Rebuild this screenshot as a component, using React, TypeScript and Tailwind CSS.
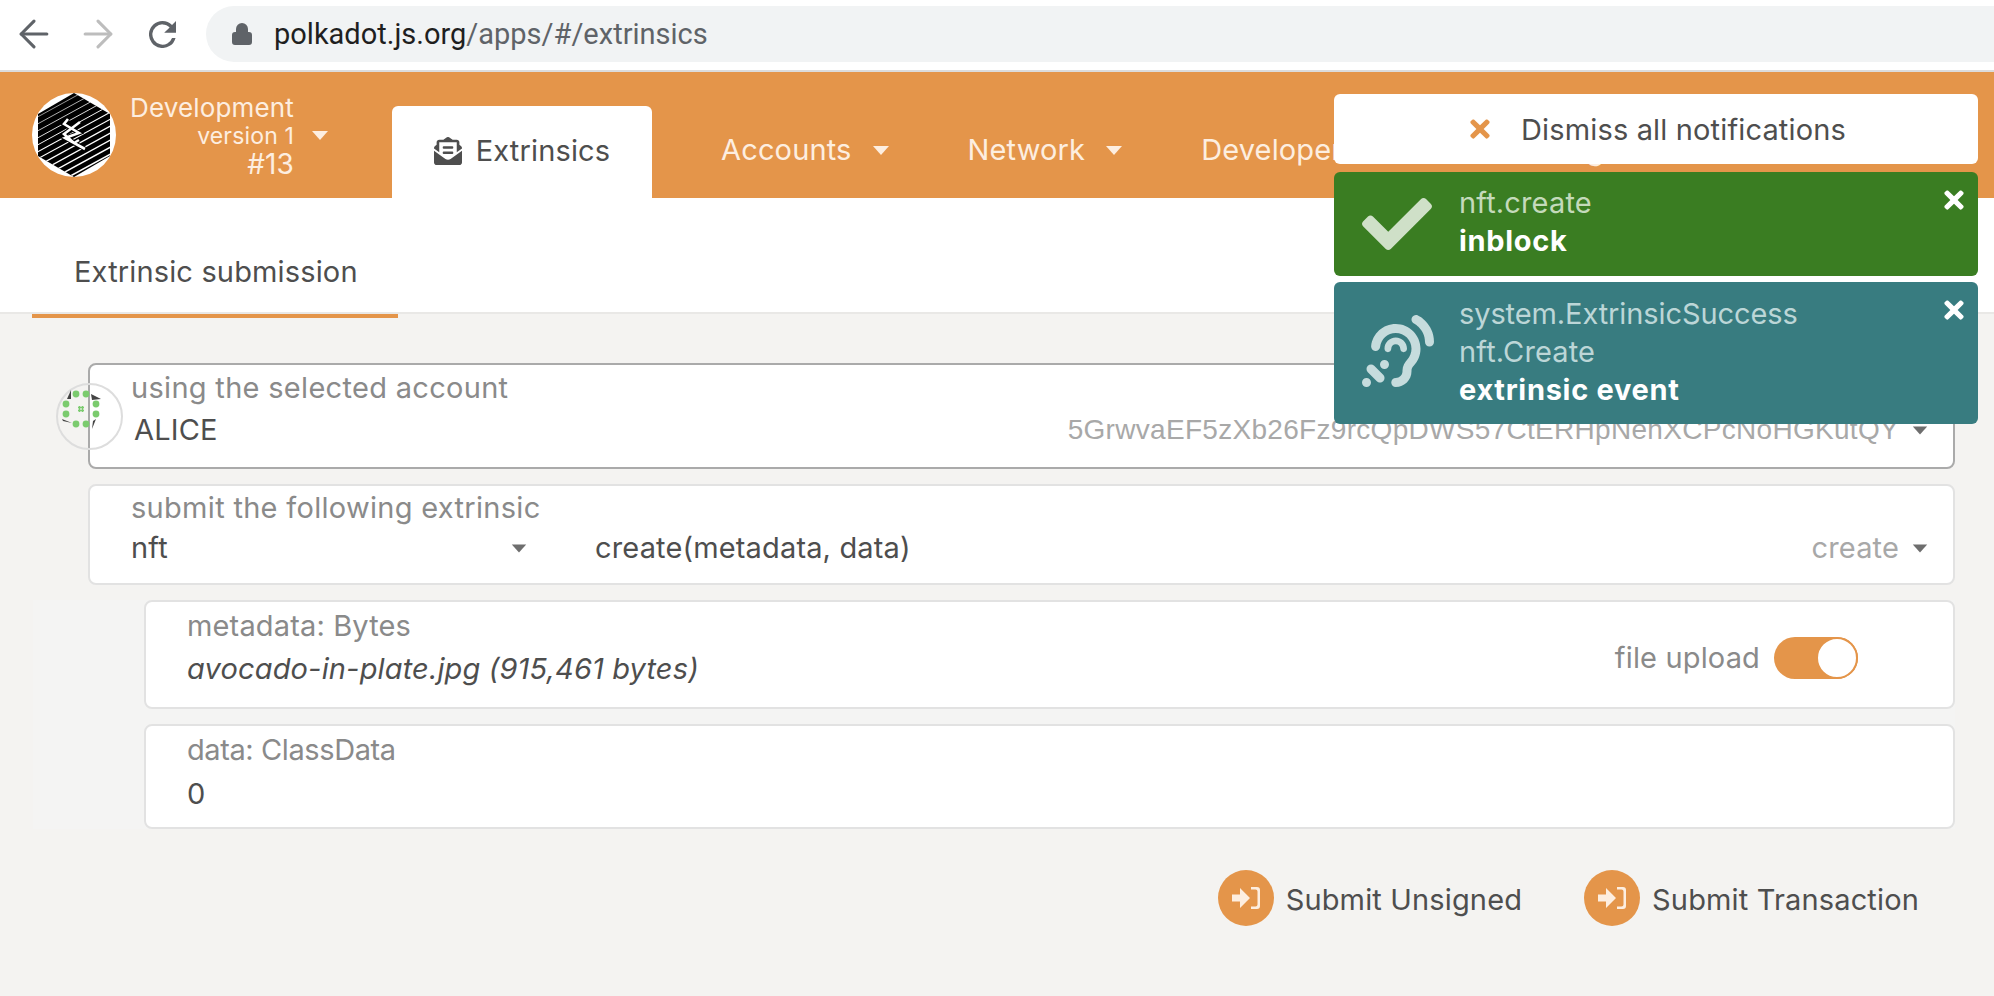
import { ArrowLeft, ArrowRight, Lock } from "lucide-react";
import { FaCheck, FaEnvelopeOpenText, FaTimes } from "react-icons/fa";
import { FaEarListen } from "react-icons/fa6";

const Caret = ({ className }: { className: string }) => (
  <span className={`inline-block w-0 h-0 border-x-[8px] border-x-transparent border-t-[9px] ${className}`} />
);

const Logo = () => (
  <div className="w-[84px] h-[84px] rounded-full bg-white shrink-0">
    <svg viewBox="0 0 84 84" className="w-full h-full">
      <defs>
        <clipPath id="hex">
          <polygon points="42,0 78,21 78,63 42,84 6,63 6,21" />
        </clipPath>
      </defs>
      <polygon points="42,0 78,21 78,63 42,84 6,63 6,21" fill="#000" />
      <g clipPath="url(#hex)" stroke="#fff">
        {Array.from({ length: 15 }).map((_, i) => (
          <line key={i} x1="0" y1={20 + i * 7} x2="84" y2={-26 + i * 7} strokeWidth={0.5 + i * 0.09} />
        ))}
      </g>
      <path d="M36 26 L32 31 L47 40 L33 45 L53 56 M48 29 L32 41 L42 50 L47 47" fill="none" stroke="#000" strokeWidth="4.500" />
      <path d="M36 26 L32 31 L47 40 L33 45 L53 56 M48 29 L32 41 L42 50 L47 47" fill="none" stroke="#fff" strokeWidth="2.600" />
    </svg>
  </div>
);

const SubmitButton = ({ label }: { label: string }) => (
  <div className="flex items-center gap-[12px]">
    <div className="w-[56px] h-[56px] rounded-full bg-[#e4954a] flex items-center justify-center">
      <svg viewBox="0 0 28 22" className="w-[28px] h-[22px]" fill="#fdeee0">
        <path d="M0 7.500h8V1l10 10-10 10v-6.500H0z" />
        <path d="M19 0h6a3 3 0 0 1 3 3v16a3 3 0 0 1-3 3h-6v-2.500h4.500a2 2 0 0 0 2-2v-13a2 2 0 0 0-2-2H19z" />
      </svg>
    </div>
    <span className="pt-[3px] text-[#4e4e4e]">{label}</span>
  </div>
);

export default function App() {
  return (
    <div className="relative w-[1994px] h-[996px] overflow-hidden bg-[#f4f3f1] font-['Inter',sans-serif] text-[29px] tracking-[0.15px]">
      {/* browser bar */}
      <div className="h-[72px] bg-white border-b-2 border-[#dcdcdc] flex items-start font-['Roboto',sans-serif] tracking-normal">
        <div className="w-[206px] flex items-center pl-[12px] pt-[12px]">
          <ArrowLeft size={44} strokeWidth={1.7} className="text-[#5f6368]" />
          <ArrowRight size={44} strokeWidth={1.7} className="text-[#bdbdbd] ml-[20px]" />
          <svg viewBox="4 4 16 16" className="w-[27px] h-[27px] ml-[29px]" fill="#5f6368">
            <path d="M17.650 6.350A7.960 7.960 0 0 0 12 4a8 8 0 1 0 7.730 10h-2.080A6 6 0 1 1 12 6c1.660 0 3.140.69 4.220 1.780L13 11h7V4z" />
          </svg>
        </div>
        <div className="mt-[6px] flex-1 h-[56px] rounded-l-[28px] bg-[#f1f3f4] flex items-center pl-[24px] text-[#1f1f1f]">
          <Lock size={24} className="text-[#5f6368] fill-[#5f6368] mr-[20px]" />
          <span className="pt-[2px]">
            polkadot.js.org<span className="text-[#5f6368]">/apps/#/extrinsics</span>
          </span>
        </div>
      </div>

      {/* app header */}
      <div className="h-[126px] bg-[#e4954a] flex items-end pl-[32px] text-[#fdeee0]">
        <div className="self-center flex items-center">
          <Logo />
          <div className="w-[178px] text-right pt-[2px]">
            <div className="text-[26px] leading-[30px]">Development</div>
            <div className="text-[23px] leading-[26px]">version 1</div>
            <div className="text-[28px] leading-[30px]">#13</div>
          </div>
          <Caret className="border-t-[#fdeee0] ml-[18px]" />
        </div>
        <div className="ml-[64px] w-[260px] h-[92px] bg-white rounded-t-[6px] flex items-center justify-center gap-[14px] text-[#4e4e4e] pb-[2px]">
          <FaEnvelopeOpenText className="w-[28px] h-[28px] text-[#4e4e4e]" />
          Extrinsics
        </div>
        <div className="h-[92px] flex items-center gap-[21px] ml-[69px] pb-[4px]">
          Accounts <Caret className="border-t-[#fdeee0]" />
        </div>
        <div className="h-[92px] flex items-center gap-[21px] ml-[79px] pb-[4px]">
          Network <Caret className="border-t-[#fdeee0]" />
        </div>
        <div className="h-[92px] flex items-center gap-[21px] ml-[79px] pb-[4px]">
          Developer <Caret className="border-t-[#fdeee0]" />
        </div>
        <div className="h-[92px] flex items-center gap-[21px] ml-[128px] pb-[4px]">
          Settings <Caret className="border-t-[#fdeee0]" />
        </div>
      </div>

      {/* sub tab */}
      <div className="h-[116px] bg-white border-b-2 border-[#e9e8e6] flex items-center pl-[74px] pt-[34px] text-[#4e4e4e]">
        Extrinsic submission
      </div>
      <div className="ml-[32px] w-[366px] h-[4px] bg-[#e4954a]" />

      {/* form */}
      <div className="ml-[88px] mr-[39px] mt-[45px] flex flex-col gap-[15px]">
        <div className="h-[106px] bg-white border-2 border-[#aaaaaa] rounded-[8px] pl-[41px] pt-[5px]">
          <div className="leading-[36px] tracking-[0.3px] text-[#8a8a8a]">using the selected account</div>
          <div className="mt-[6px] flex items-center leading-[36px] text-[#4e4e4e]">
            <span className="ml-[3px]">ALICE</span>
            <span className="ml-auto font-['Liberation_Sans',sans-serif] text-[28px] tracking-[0.3px] text-[#a8a8a8]">
              5GrwvaEF5zXb26Fz9rcQpDWS57CtERHpNehXCPcNoHGKutQY
            </span>
            <Caret className="border-t-[#6e6e6e] ml-[13px] mr-[25px] scale-90" />
          </div>
        </div>

        <div className="h-[101px] bg-white border-2 border-[#e2e2e2] rounded-[8px] pl-[41px] pt-[4px]">
          <div className="leading-[36px] tracking-[0.3px] text-[#8a8a8a]">submit the following extrinsic</div>
          <div className="mt-[4px] flex items-center leading-[36px] text-[#4e4e4e]">
            <span className="w-[380px]">nft</span>
            <Caret className="border-t-[#6e6e6e] scale-90" />
            <span className="ml-[68px]">create(metadata, data)</span>
            <span className="ml-auto text-[#a8a8a8]">create</span>
            <Caret className="border-t-[#6e6e6e] ml-[13px] mr-[25px] scale-90" />
          </div>
        </div>

        {/* params, on a barely lighter band that starts further left */}
        <div className="-ml-[55px] pl-[111px] bg-[#f4f4f3] flex flex-col gap-[15px]">
          <div className="h-[109px] bg-white border-2 border-[#e2e2e2] rounded-[8px] pl-[41px] pt-[6px] flex items-start">
            <div>
              <div className="leading-[36px] text-[#8a8a8a]">metadata: Bytes</div>
              <div className="mt-[7px] leading-[36px] italic text-[#4e4e4e]">avocado-in-plate.jpg (915,461 bytes)</div>
            </div>
            <div className="ml-auto mr-[95px] mt-[28px] flex items-center gap-[14px] text-[#8a8a8a]">
              file upload
              <div className="w-[84px] h-[42px] rounded-full bg-[#e4954a] flex justify-end">
                <div className="w-[42px] h-[42px] rounded-full bg-white border-2 border-[#e4954a]" />
              </div>
            </div>
          </div>
          <div className="h-[105px] bg-white border-2 border-[#e2e2e2] rounded-[8px] pl-[41px] pt-[6px]">
            <div className="leading-[36px] tracking-[-0.4px] text-[#8a8a8a]">data: ClassData</div>
            <div className="mt-[8px] leading-[36px] text-[#4e4e4e]">0</div>
          </div>
        </div>

        <div className="mt-[26px] mr-[36px] flex justify-end gap-[62px]">
          <SubmitButton label="Submit Unsigned" />
          <SubmitButton label="Submit Transaction" />
        </div>
      </div>

      {/* identicon sits over the account box edge */}
      <div className="absolute left-[56px] top-[383px] w-[67px] h-[67px] rounded-full border-2 border-[#dddddd]">
        <svg viewBox="2 2 63 63" className="w-full h-full">
          <polygon points="15,7 11,16 15,16" fill="#444" />
          <polygon points="35,11 45,16 36,17" fill="#444" />
          <polygon points="6,36 16,40 7,38" fill="#444" />
          <polygon points="36,46 40,36 37,38" fill="#444" />
          {[
            [20, 11], [30, 11], [10, 21], [40, 21], [10, 31], [40, 31], [20, 41], [30, 41],
          ].map(([cx, cy]) => (
            <circle key={`${cx}-${cy}`} cx={cx} cy={cy} r="3.4" fill="#7bcb6e" />
          ))}
          <path d="M22 24.500h6M22 27.500h6M23.500 23v6M26.500 23v6" stroke="#7bcb6e" strokeWidth="1.400" />
        </svg>
      </div>

      {/* notifications */}
      <div className="absolute left-[1334px] top-[94px] w-[644px] flex flex-col">
        <div className="h-[70px] rounded-[6px] bg-white flex items-center pl-[136px] gap-[31px] text-[#4e4e4e]">
          <FaTimes className="text-[#e4954a] w-[20px] h-[28px]" />
          <span className="pt-[2px]">Dismiss all notifications</span>
        </div>
        <div className="relative mt-[8px] h-[104px] rounded-[6px] bg-[#3a7d22] flex items-center pl-[28px]">
          <FaCheck className="text-[#cfe0c8] w-[70px] h-[70px]" />
          <div className="ml-[27px] -mt-[5px] leading-[38px]">
            <div className="text-[#c4dabb]">nft.create</div>
            <div className="text-white font-bold tracking-[0.7px]">inblock</div>
          </div>
          <FaTimes className="absolute right-[14px] top-[14px] text-white w-[20px] h-[28px]" />
        </div>
        <div className="relative mt-[6px] h-[142px] rounded-[6px] bg-[#387c80] flex items-center pl-[28px]">
          <FaEarListen className="text-[#c6dcdd] w-[72px] h-[72px] -mt-[4px]" />
          <div className="ml-[25px] -mt-[3px] leading-[38px]">
            <div className="text-[#bcd6d7] tracking-[-0.1px]">system.ExtrinsicSuccess</div>
            <div className="text-[#bcd6d7]">nft.Create</div>
            <div className="text-white font-bold tracking-[0.7px]">extrinsic event</div>
          </div>
          <FaTimes className="absolute right-[14px] top-[14px] text-white w-[20px] h-[28px]" />
        </div>
      </div>
    </div>
  );
}
